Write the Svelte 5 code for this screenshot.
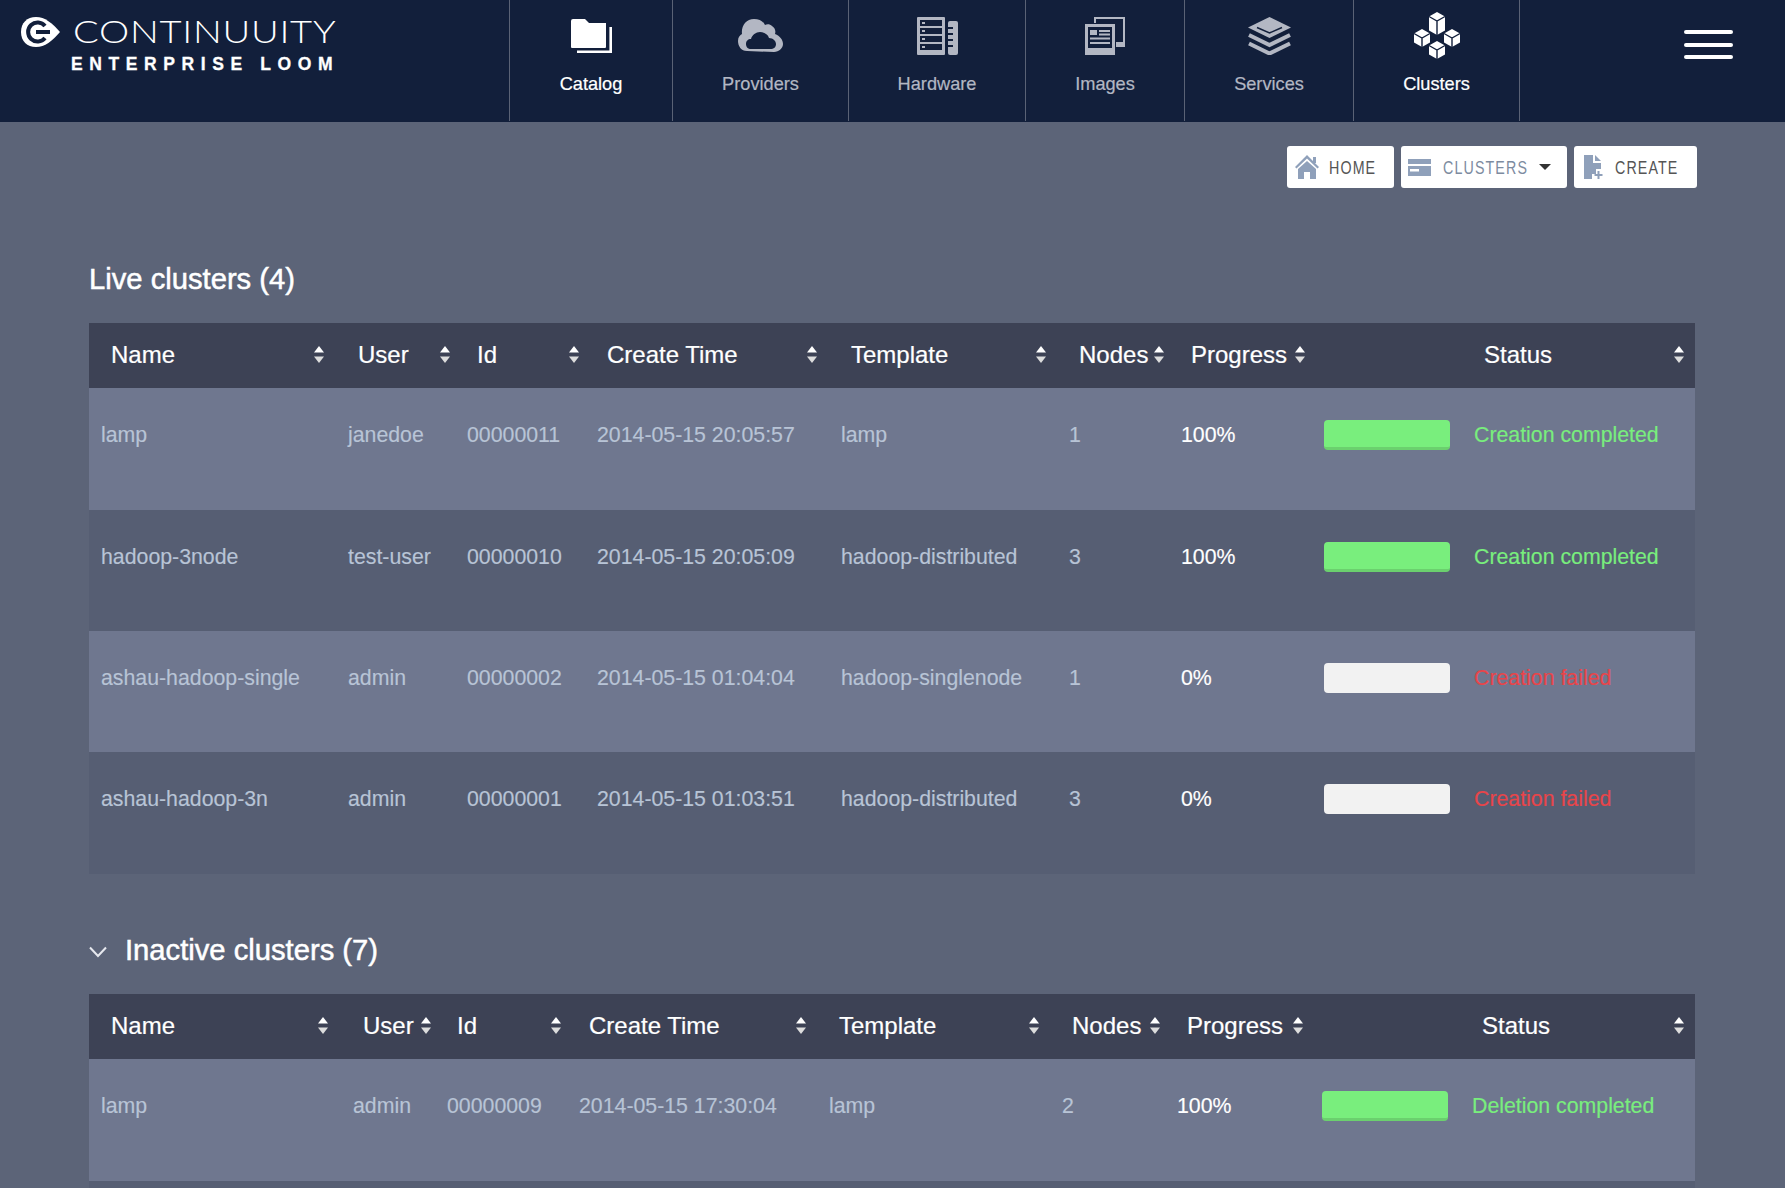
<script>
  const navItems = [
    { label: 'Catalog', w: 163, active: true, icon: 'folder' },
    { label: 'Providers', w: 176, icon: 'cloud' },
    { label: 'Hardware', w: 177, icon: 'server' },
    { label: 'Images', w: 159, icon: 'images' },
    { label: 'Services', w: 169, icon: 'stack' },
    { label: 'Clusters', w: 166, active: true, icon: 'cubes' }
  ];
  const labels = ['Name', 'User', 'Id', 'Create Time', 'Template', 'Nodes', 'Progress', 'Status'];
  const live = {
    cols: [247, 119, 130, 244, 228, 112, 143, 150, 233],
    pads: [12, 5, 6, 12, 11, 5, 157, 11],
    rows: [
      ['lamp', 'janedoe', '00000011', '2014-05-15 20:05:57', 'lamp', '1', '100%', 'Creation completed'],
      ['hadoop-3node', 'test-user', '00000010', '2014-05-15 20:05:09', 'hadoop-distributed', '3', '100%', 'Creation completed'],
      ['ashau-hadoop-single', 'admin', '00000002', '2014-05-15 01:04:04', 'hadoop-singlenode', '1', '0%', 'Creation failed'],
      ['ashau-hadoop-3n', 'admin', '00000001', '2014-05-15 01:03:51', 'hadoop-distributed', '3', '0%', 'Creation failed']
    ]
  };
  const inactive = {
    cols: [252, 94, 132, 250, 233, 115, 145, 150, 235],
    pads: [13, 4, 6, 11, 11, 5, 157, 11],
    rows: [['lamp', 'admin', '00000009', '2014-05-15 17:30:04', 'lamp', '2', '100%', 'Deletion completed']]
  };
  const headCols = (c) => [...c.slice(0, 6), c[6] + c[7], c[8]].map((v) => v + 'px').join(' ');
  const bodyCols = (c) => c.map((v) => v + 'px').join(' ');
</script>

{#snippet cube(x, y, h = 18)}
  <g transform="translate({x} {y})">
    <path d="M8 0 16 4.5V{h - 4.5}L8 {h} 0 {h - 4.5}V4.5Z" fill="#fff" />
    <path d="M0 4.5 8 9 16 4.5M8 9V{h}" fill="none" stroke="#121f3b" stroke-width="1.4" />
  </g>
{/snippet}

{#snippet navIcon(name)}
  {#if name === 'folder'}
    <svg width="41" height="34" viewBox="0 0 41 34">
      <path d="M0 2a2 2 0 0 1 2-2h12l4 4h17v24a1 1 0 0 1-1 1H1a1 1 0 0 1-1-1Z" fill="currentColor" />
      <path d="M39.7 8v24.700H6" fill="none" stroke="currentColor" stroke-width="2.600" />
    </svg>
  {:else if name === 'cloud'}
    <svg width="45" height="35" viewBox="0 0 45 35">
      <path d="M9 33C3 33 0 28 0 23c0-4 2-6 4-7C3 8 8 1 16 1c5 0 9 2 11 6 2-1 5-1 7 1 3 2 4 5 3 8 5 2 8 6 8 10 0 4-4 8-9 8Z" fill="currentColor" />
      <path d="M13 31c-3 0-5-2-5-5 0-3 2-5 5-5 1-4 5-7 9-7 4 0 8 2 9 6 4 0 7 3 7 6 0 3-2 5-6 5Z" fill="#121f3b" />
    </svg>
  {:else if name === 'server'}
    <svg width="41" height="38" viewBox="0 0 41 38">
      <rect width="28" height="38" rx="1" fill="currentColor" />
      <g fill="#121f3b">
        <rect x="3" y="3" width="22" height="6" /><rect x="3" y="11" width="22" height="6" />
        <rect x="3" y="19" width="22" height="6" /><rect x="3" y="27" width="22" height="6" />
      </g>
      <g fill="currentColor">
        <rect x="5" y="5" width="3" height="2" /><rect x="5" y="13" width="3" height="2" />
        <rect x="5" y="21" width="3" height="2" /><rect x="5" y="29" width="3" height="2" />
      </g>
      <path d="M31 6a2 2 0 0 1 2-2h6a2 2 0 0 1 2 2v30a2 2 0 0 1-2 2h-6a2 2 0 0 1-2-2Z" fill="currentColor" />
      <path d="M31 11h5M31 17h5M31 23h5M31 29h5" stroke="#121f3b" stroke-width="2" />
    </svg>
  {:else if name === 'images'}
    <svg width="40" height="38" viewBox="0 0 40 38">
      <path d="M10 6V1h29v28h-8" fill="none" stroke="currentColor" stroke-width="2" />
      <rect x="31" y="25" width="8" height="5" fill="currentColor" />
      <rect y="7" width="30" height="31" fill="currentColor" />
      <rect x="3" y="10" width="24" height="21" fill="#121f3b" />
      <rect x="5" y="13" width="7" height="5" fill="currentColor" />
      <path d="M14 14h11M14 17.500h11M5 21.500h20M5 26h20" stroke="currentColor" stroke-width="1.800" />
    </svg>
  {:else if name === 'stack'}
    <svg width="43" height="38" viewBox="0 0 43 38">
      <path d="M21.500 0 43 10.500 21.500 21 0 10.500Z" fill="currentColor" />
      <path d="M9 10.500 21.500 16 34 10.500" fill="none" stroke="#121f3b" stroke-width="1.500" />
      <path d="M1 18l20.500 10L42 18M1 26.500l20.500 10L42 26.500" fill="none" stroke="currentColor" stroke-width="4" />
    </svg>
  {:else}
    <svg width="46" height="47" viewBox="0 0 46 47">
      {@render cube(15, 0, 23)}
      {@render cube(0, 17)}
      {@render cube(30, 17)}
      {@render cube(15, 29)}
    </svg>
  {/if}
{/snippet}

{#snippet sort()}
  <svg class="sort" width="10" height="17" viewBox="0 0 10 17">
    <path d="M5 0 10 6.500H0Z" fill="#fff" />
    <path d="M5 17 10 10.500H0Z" fill="#ddd" />
  </svg>
{/snippet}

{#snippet clusterTable(t)}
  <div class="table">
    <div class="thead" style="grid-template-columns:{headCols(t.cols)}">
      {#each labels as label, i}
        <div class="th" style="padding-right:{t.pads[i]}px"><span>{label}</span>{@render sort()}</div>
      {/each}
    </div>
    {#each t.rows as r}
      <div class="row" style="grid-template-columns:{bodyCols(t.cols)}">
        {#each r.slice(0, 6) as cell}<div class="td">{cell}</div>{/each}
        <div class="td pct">{r[6]}</div>
        <div class="td"><div class="bar" class:done={r[6] === '100%'}></div></div>
        <div class="td" class:ok={r[6] === '100%'} class:fail={r[6] === '0%'}>{r[7]}</div>
      </div>
    {/each}
  </div>
{/snippet}

<div class="page">
  <header class="topbar">
    <div class="brand">
      <svg class="mark" width="39" height="30" viewBox="0 0 39 30">
        <path d="M15 0c9 0 16 6 24 15-8 9-15 15-24 15C6 30 0 24 0 15S6 0 15 0Z" fill="#fff" />
        <path d="M24 9a9.500 9.500 0 1 0 0 12" fill="none" stroke="#121f3b" stroke-width="4" />
        <path d="M15 15h14" stroke="#121f3b" stroke-width="4" />
      </svg>
      <div class="wordmark">
        <div class="w1">CONTINUUITY</div>
        <div class="w2">ENTERPRISE LOOM</div>
      </div>
    </div>
    <nav class="nav">
      {#each navItems as n}
        <div class="navitem" class:active={n.active} style="width:{n.w}px">
          <div class="navicon">{@render navIcon(n.icon)}</div>
          <div class="navlabel">{n.label}</div>
        </div>
      {/each}
    </nav>
    <div class="burger"><i></i><i></i><i></i></div>
  </header>

  <main class="content">
    <div class="toolbar">
      <div class="btn home">
        <svg width="24" height="24" viewBox="0 0 24 24">
          <path d="M12 0 24 12l-1.500 1.500L12 3.500 1.500 13.500 0 12Z" fill="#8fa0ba" />
          <path d="M12 6 21 14v10h-6v-7H9v7H3V14Z" fill="#8fa0ba" />
          <rect x="18" y="2" width="3" height="6" fill="#8fa0ba" />
        </svg>
        <span>HOME</span>
      </div>
      <div class="btn clusters">
        <svg width="23" height="17" viewBox="0 0 23 17">
          <path d="M0 0h23v5H0ZM0 7h23v10H0Z" fill="#8fa0ba" />
          <rect x="2" y="10" width="9" height="2.500" fill="#fff" />
        </svg>
        <span>CLUSTERS</span>
        <i class="caret"></i>
      </div>
      <div class="btn create">
        <svg width="19" height="25" viewBox="0 0 19 25">
          <path d="M0 0h9v8h8v6h-5v5H8v5H0Z" fill="#8fa0ba" />
          <path d="M11 0l6 6h-6Z" fill="#8fa0ba" />
          <path d="M14.500 16v8M10.500 20h8" stroke="#8fa0ba" stroke-width="2" />
        </svg>
        <span>CREATE</span>
      </div>
    </div>

    <h2 class="title live">Live clusters (4)</h2>
    {@render clusterTable(live)}

    <h2 class="title inactive">
      <svg width="18" height="12" viewBox="0 0 18 12"><path d="M1 1.500 9 10l8-8.500" fill="none" stroke="#e6e8ee" stroke-width="2" /></svg>
      Inactive clusters (7)
    </h2>
    {@render clusterTable(inactive)}
    <div class="tail"></div>
  </main>
</div>

<style>
  :global(body) { margin: 0; background: #5c6478; }
  .page { height: 1188px; overflow: hidden; font-family: "Liberation Sans", Arial, sans-serif; }
  .topbar { height: 122px; background: #121f3b; display: flex; }
  .brand { width: 509px; box-sizing: border-box; padding: 17px 0 0 21px; display: flex; align-items: flex-start; }
  .mark { flex: none; }
  .wordmark { margin-left: 13px; margin-top: -4px; color: #fff; }
  .w1 { font-family: Lato, sans-serif; font-weight: 300; font-size: 31px; line-height: 36px; letter-spacing: 0.6px; white-space: nowrap; transform: scaleX(1.23); transform-origin: left center; }
  .w2 { font-weight: 700; font-size: 17.500px; line-height: 18px; letter-spacing: 6.600px; margin: 6px 0 0 -2px; white-space: nowrap; -webkit-text-stroke: 0.3px #fff; }
  .nav { display: flex; height: 121px; border-left: 1px solid #5a6275; }
  .navitem { box-sizing: border-box; border-right: 1px solid #5a6275; color: #b3b7c3; display: flex; flex-direction: column; align-items: center; }
  .navitem.active { color: #fff; }
  .navicon { height: 58px; margin-top: 6.500px; display: flex; align-items: center; justify-content: center; }
  .navicon svg { display: block; }
  .navlabel { font-size: 18.200px; line-height: 24px; margin-top: 7.500px; -webkit-text-stroke: 0.2px currentColor; }
  .burger { margin: 30px 0 0 164px; width: 49px; display: flex; flex-direction: column; gap: 8.500px; }
  .burger i { height: 4px; background: #fff; border-radius: 2px; display: block; }

  .content { padding: 0 90px 0 89px; }
  .toolbar { display: flex; justify-content: flex-end; gap: 7px; margin: 24px -2px 0 0; }
  .btn { height: 42px; background: #fff; border-radius: 3px; display: flex; align-items: center; box-sizing: border-box; font-size: 19px; letter-spacing: 1.500px; color: #555; }
  .btn svg { flex: none; }
  .btn span { display: inline-block; transform: scaleX(0.75); transform-origin: left center; padding-top: 2px; }
  .home { width: 107px; padding-left: 8px; }
  .home span { margin-left: 10px; }
  .clusters { width: 166px; padding-left: 7px; color: #7d8ba0; }
  .clusters span { margin-left: 12px; }
  .caret { margin-left: -17px; border: 6px solid transparent; border-top: 6px solid #333; border-bottom: 0; }
  .create { width: 123px; padding-left: 10px; }
  .create span { margin-left: 12px; }

  .title { margin: 0; color: #fff; font-size: 29.200px; font-weight: 400; line-height: 36px; -webkit-text-stroke: 0.5px #fff; }
  .title.live { margin-top: 73px; margin-bottom: 26px; }
  .title.inactive { margin-top: 58px; margin-bottom: 26px; display: flex; align-items: center; gap: 18px; }
  .title.inactive svg { margin-top: 4px; }

  .thead { display: grid; height: 65px; background: #3d4255; align-items: center; }
  .th { display: flex; justify-content: space-between; align-items: center; padding-left: 22px; color: #fff; font-size: 24px; line-height: 30px; box-sizing: border-box; min-width: 0; -webkit-text-stroke: 0.2px #fff; }
  .th span { margin-top: -2px; }
  .sort { flex: none; margin-top: -2px; }
  .row { display: grid; height: 121px; }
  .row:nth-child(2), .row:last-child { height: 122px; }
  .row:nth-child(even) { background: #6f778f; }
  .row:nth-child(odd) { background: #565e73; }
  .td { padding: 33px 0 0 12px; color: #b8c4d6; font-size: 21.300px; line-height: 29px; white-space: nowrap; box-sizing: border-box; min-width: 0; -webkit-text-stroke: 0.15px currentColor; }
  .td.pct { color: #fff; }
  .td.ok { color: #79ee7d; }
  .td.fail { color: #e8454a; }
  .td:has(.bar) { padding-top: 31.500px; }
  .bar { width: 126px; height: 30px; box-sizing: border-box; border-radius: 4px; background: #f2f2f2; }
  .bar.done { background: #79ee7d; border-bottom: 3px solid #6bd06e; }
  .tail { height: 40px; background: #565e73; }
</style>
